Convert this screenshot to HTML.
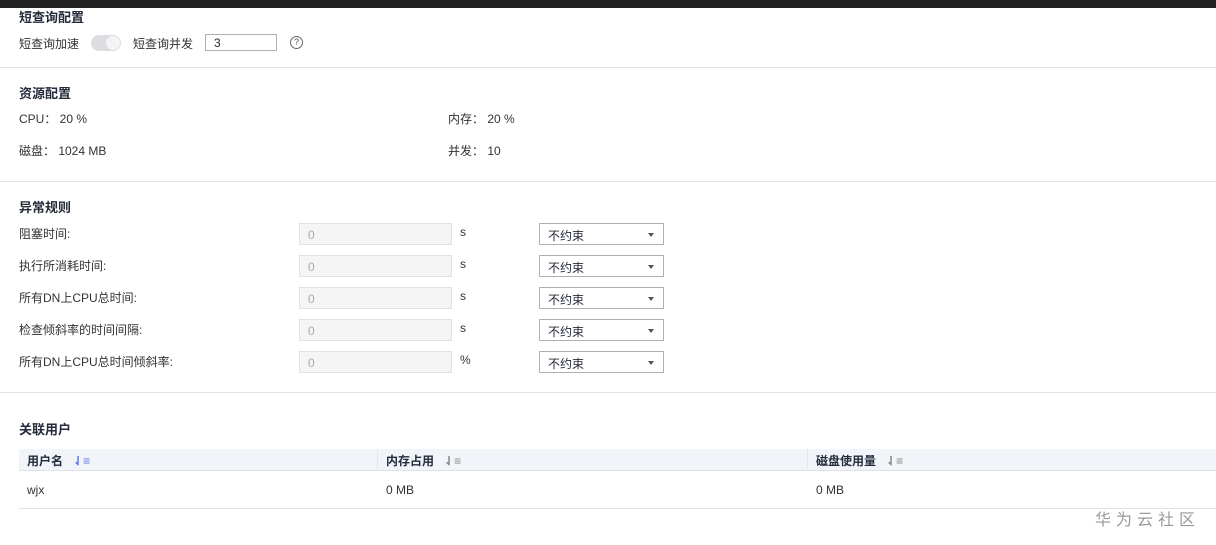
<!DOCTYPE html><html><head><meta charset="utf-8"><style>
*{margin:0;padding:0;box-sizing:border-box}
body{width:1216px;height:545px;background:#fff;position:relative;overflow:hidden;font-family:"Liberation Sans","Noto Sans CJK SC",sans-serif;font-size:12px;color:#333}
.a{position:absolute;white-space:nowrap}
.t{font-weight:bold;font-size:13px;color:#252b3a}
.hr{position:absolute;left:0;width:1216px;height:1px;background:#dfe1e6}
.in{position:absolute;left:299px;width:153px;height:22px;background:#f5f5f6;border:1px solid #dfe1e6;color:#aaa;padding:4px 8px}
.sel{position:absolute;left:539px;width:125px;height:22px;border:1px solid #adb0b8;padding:3px 8px;color:#252b3a}
.sel:after{content:"";position:absolute;right:9px;top:9px;border:3.5px solid transparent;border-top:4px solid #555;border-bottom:0}
.u{position:absolute;left:460px}
.ic{display:inline-block;margin-left:10px;color:#888;font-size:12px}
</style></head><body>
<div class="a" style="left:0;top:0;width:1216px;height:8px;background:#222"></div>
<div class="a t" style="left:19px;top:7px">短查询配置</div>
<div class="a" style="left:19px;top:35px">短查询加速</div>
<div class="a" style="left:91px;top:35px;width:30px;height:16px;border-radius:8px;background:#dcdde0"><div style="position:absolute;right:1px;top:1px;width:14px;height:14px;border-radius:7px;background:#f4f4f5"></div></div>
<div class="a" style="left:133px;top:35px">短查询并发</div>
<div class="a" style="left:205px;top:34px;width:72px;height:17px;border:1px solid #adb0b8;padding:1px 8px;color:#252b3a">3</div>
<div class="a" style="left:290px;top:36px;width:13px;height:13px;border:1px solid #666;border-radius:50%;font-size:9px;text-align:center;line-height:11px;color:#555">?</div>
<div class="hr" style="top:67px"></div>
<div class="a t" style="left:19px;top:83px">资源配置</div>
<div class="a" style="left:19px;top:110px">CPU：&nbsp;20 %</div>
<div class="a" style="left:448px;top:110px">内存：&nbsp;20 %</div>
<div class="a" style="left:19px;top:142px">磁盘：&nbsp;1024 MB</div>
<div class="a" style="left:448px;top:142px">并发：&nbsp;10</div>
<div class="hr" style="top:181px"></div>
<div class="a t" style="left:19px;top:197px">异常规则</div>
<div class="a" style="left:19px;top:225px">阻塞时间:</div><div class="in" style="top:223px">0</div><div class="u a" style="top:225px">s</div><div class="sel" style="top:223px">不约束</div>
<div class="a" style="left:19px;top:257px">执行所消耗时间:</div><div class="in" style="top:255px">0</div><div class="u a" style="top:257px">s</div><div class="sel" style="top:255px">不约束</div>
<div class="a" style="left:19px;top:289px">所有DN上CPU总时间:</div><div class="in" style="top:287px">0</div><div class="u a" style="top:289px">s</div><div class="sel" style="top:287px">不约束</div>
<div class="a" style="left:19px;top:321px">检查倾斜率的时间间隔:</div><div class="in" style="top:319px">0</div><div class="u a" style="top:321px">s</div><div class="sel" style="top:319px">不约束</div>
<div class="a" style="left:19px;top:353px">所有DN上CPU总时间倾斜率:</div><div class="in" style="top:351px">0</div><div class="u a" style="top:353px">%</div><div class="sel" style="top:351px">不约束</div>
<div class="hr" style="top:392px"></div>
<div class="a t" style="left:19px;top:419px">关联用户</div>
<div class="a" style="left:19px;top:449px;width:1197px;height:22px;background:#f1f4f9;border-bottom:1px solid #dfe1e6"></div>
<div class="a" style="left:377px;top:449px;width:1px;height:22px;background:#e4e7ee"></div>
<div class="a" style="left:807px;top:449px;width:1px;height:22px;background:#e4e7ee"></div>
<div class="a" style="left:27px;top:452px;font-weight:bold;color:#252b3a">用户名<span class="ic" style="color:#5e7ce0">⇃≡</span></div>
<div class="a" style="left:386px;top:452px;font-weight:bold;color:#252b3a">内存占用<span class="ic">⇃≡</span></div>
<div class="a" style="left:816px;top:452px;font-weight:bold;color:#252b3a">磁盘使用量<span class="ic">⇃≡</span></div>
<div class="a" style="left:27px;top:483px">wjx</div>
<div class="a" style="left:386px;top:483px">0 MB</div>
<div class="a" style="left:816px;top:483px">0 MB</div>
<div class="a" style="left:19px;top:508px;width:1197px;height:1px;background:#dfe1e6"></div>
<div class="a" style="left:1095px;top:506px;font-size:16px;color:#999;letter-spacing:5px">华为云社区</div>
</body></html>
